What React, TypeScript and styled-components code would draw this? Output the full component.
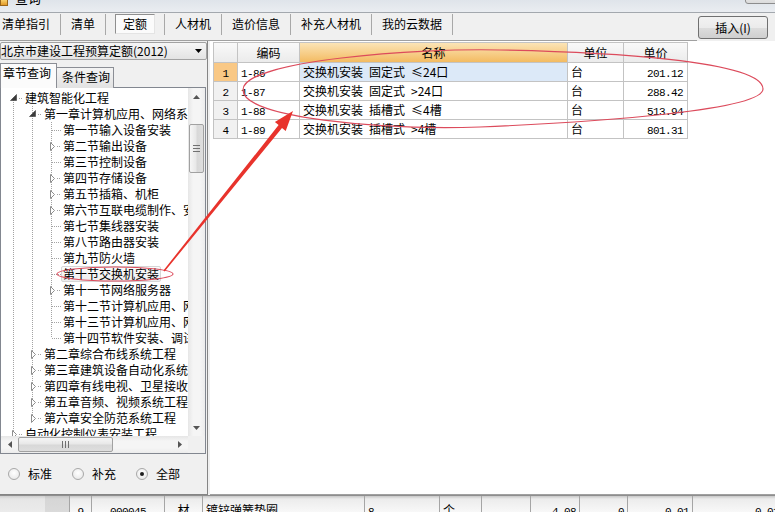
import React from "react";
import styled, { createGlobalStyle } from "styled-components";

const CJK = `"Noto Sans CJK SC", "Liberation Sans", sans-serif`;
const MONO = `"Liberation Mono", "DejaVu Sans Mono", monospace`;

const GlobalStyle = createGlobalStyle`
  *, *::before, *::after { box-sizing: border-box; }
  html, body { margin: 0; padding: 0; background: #f0f0f0; }
  body { font-family: ${CJK}; font-size: 12px; color: #000; }
`;

const Window = styled.div`
  position: relative;
  width: 775px;
  height: 512px;
  overflow: hidden;
  display: flex;
  flex-direction: column;
  background: #f0f0f0;
  font-family: ${CJK};
  font-size: 12px;
  color: #000;
`;

/* ---------- title bar ---------- */
const TitleBar = styled.div`
  flex: none;
  height: 13px;
  display: flex;
  align-items: flex-start;
  background: linear-gradient(#dfe4ea, #eaedf1);
  border-bottom: 1px solid #a3a8ae;
  overflow: hidden;
`;
const TitleIcon = styled.span`
  flex: none;
  width: 8px;
  height: 6px;
  background: linear-gradient(#f8d06a, #e39a28);
  border: 1px solid #9a661a;
  border-top: none;
`;
const TitleText = styled.span`
  margin: -10px 0 0 7px;
  font-size: 13px;
  line-height: 16px;
`;
const GhostButton = styled.span`
  flex: none;
  margin: -12px -8px 0 auto;
  width: 38px;
  height: 16px;
  border: 1px solid #8d8d8d;
  border-radius: 3px;
  background: linear-gradient(#f3f3f3, #dcdcdc);
`;

/* ---------- toolbar ---------- */
const Toolbar = styled.div`
  flex: none;
  height: 28px;
  display: flex;
`;
const NavRow = styled.div`
  flex: 1;
  display: flex;
  align-items: flex-start;
  padding-top: 1px;
  border-bottom: 1px solid #a0a0a0;
`;
const NavItem = styled.div<{ $first?: boolean }>`
  height: 21px;
  line-height: 20px;
  padding: 0 10px 0 ${(p) => (p.$first ? 2 : 10)}px;
  border-right: 1px solid #a8a8a8;
  white-space: nowrap;
`;
const NavSelected = styled.span`
  display: inline-block;
  margin: 0 -1px;
  padding: 0 7px;
  line-height: 18px;
  border: 1px solid;
  border-color: #8f8f8f #e4e4e4 #e4e4e4 #8f8f8f;
  background: #fbfbfb;
`;
const ButtonSlot = styled.div`
  flex: none;
  width: 78px;
  padding: 3px 0 0 1px;
`;
const InsertButton = styled.button`
  width: 70px;
  height: 23px;
  padding: 0;
  border: 1px solid #707070;
  border-radius: 3px;
  background: linear-gradient(#f2f2f2 0%, #ebebeb 50%, #dddddd 51%, #cfcfcf 100%);
  font-family: ${CJK};
  font-size: 12px;
  line-height: 21px;
  color: #000;
`;

/* ---------- main ---------- */
const Main = styled.div`
  flex: none;
  height: 454px;
  display: flex;
`;
const LeftPanel = styled.div`
  flex: none;
  width: 208px;
  display: flex;
  flex-direction: column;
  padding-top: 1px;
  border-right: 1px solid #858585;
  border-bottom: 1px solid #858585;
`;
const Combo = styled.div`
  flex: none;
  height: 18px;
  display: flex;
  align-items: center;
  justify-content: space-between;
  padding: 0 4px 0 0;
  border: 1px solid #a2a2a2;
  border-radius: 2px;
  background: linear-gradient(#f6f6f6, #e3e3e3);
  line-height: 16px;
  white-space: nowrap;
`;
const Tabs = styled.div`
  flex: none;
  position: relative;
  z-index: 1;
  margin-top: 3px;
  height: 25px;
  display: flex;
  align-items: flex-end;
`;
const TabButton = styled.div<{ $active?: boolean }>`
  width: 57px;
  height: ${(p) => (p.$active ? 25 : 21)}px;
  padding-left: ${(p) => (p.$active ? 2 : 5)}px;
  line-height: 17px;
  white-space: nowrap;
  border: 1px solid #8b8e95;
  border-bottom: none;
  border-left: ${(p) => (p.$active ? "1px solid #8b8e95" : "none")};
  background: ${(p) => (p.$active ? "#fbfbfb" : "linear-gradient(#f4f4f4, #e2e2e2)")};
`;
const TreeBox = styled.div`
  flex: none;
  margin-top: -1px;
  width: 206px;
  height: 367px;
  border: 1px solid #828790;
  background: #fff;
  display: grid;
  grid-template-columns: 1fr 17px;
  grid-template-rows: 1fr 17px;
`;
const TreeContent = styled.div`
  grid-column: 1;
  grid-row: 1;
  min-width: 0;
  overflow: hidden;
  padding: 2px 0 0 3px;
`;
const TreeRow = styled.div`
  height: 16px;
  display: flex;
  align-items: center;
  white-space: nowrap;
`;
const GlyphSvg = styled.svg`
  flex: none;
  display: block;
`;
const TreeLabel = styled.span<{ $selected?: boolean }>`
  flex: none;
  padding: 0 1px;
  line-height: 14px;
  border: 1px solid ${(p) => (p.$selected ? "#d6d6d6" : "transparent")};
  border-radius: 2px;
  background: ${(p) => (p.$selected ? "linear-gradient(#fbfbfb, #eeeeee)" : "transparent")};
`;

/* scrollbars */
const VScroll = styled.div`
  grid-column: 2;
  grid-row: 1;
  display: flex;
  flex-direction: column;
  background: linear-gradient(to right, #e6e6e6, #f5f5f5 30%, #f5f5f5 70%, #ececec);
`;
const HScroll = styled.div`
  grid-column: 1;
  grid-row: 2;
  display: flex;
  background: linear-gradient(#e6e6e6, #f5f5f5 30%, #f5f5f5 70%, #ececec);
`;
const Corner = styled.div`
  grid-column: 2;
  grid-row: 2;
  background: #f0f0f0;
`;
const ScrollButton = styled.div`
  flex: none;
  width: 17px;
  height: 17px;
  display: flex;
  align-items: center;
  justify-content: center;
`;
const VThumb = styled.div`
  flex: none;
  margin: 19px 1px 0;
  height: 49px;
  border: 1px solid #a1a1a1;
  border-radius: 2px;
  background: linear-gradient(to right, #f6f6f6, #e8e8e8 45%, #d8d8d8 55%, #dedede);
  display: flex;
  align-items: center;
  justify-content: center;
`;
const HThumb = styled.div`
  flex: none;
  margin: 1px 0;
  width: 95px;
  border: 1px solid #a1a1a1;
  border-radius: 2px;
  background: linear-gradient(#f6f6f6, #e8e8e8 45%, #d8d8d8 55%, #dedede);
  display: flex;
  align-items: center;
  justify-content: center;
`;
const Spacer = styled.div`
  flex: 1;
`;

/* radios */
const RadioRow = styled.div`
  flex: 1;
  display: flex;
  align-items: center;
  padding-left: 8px;
`;
const RadioItem = styled.label`
  display: flex;
  align-items: center;
  gap: 8px;
  margin-right: 20px;
  line-height: 14px;
`;
const RadioDot = styled.span`
  flex: none;
  width: 12px;
  height: 12px;
  border-radius: 50%;
  border: 1px solid #a8a8a8;
  background: radial-gradient(circle at 50% 40%, #ffffff, #e4e4e4);
  display: flex;
  align-items: center;
  justify-content: center;
`;
const RadioMark = styled.span`
  width: 4px;
  height: 4px;
  border-radius: 50%;
  background: #1e1e1e;
`;

/* right grid */
const RightPane = styled.div`
  flex: 1;
  margin-left: 2px;
  padding: 1px 0 0 3px;
  background: #fff;
  border-bottom: 1px solid #a0a0a0;
`;
const Table = styled.div`
  display: grid;
  grid-template-columns: 24px 62px 268px 56px 64px;
  grid-template-rows: 20px;
  grid-auto-rows: 19px;
  width: max-content;
  border-top: 1px solid #c3c3c3;
  border-left: 1px solid #c3c3c3;
`;
const HeadCell = styled.div<{ $hot?: boolean }>`
  border-right: 1px solid #c3c3c3;
  border-bottom: 1px solid #c3c3c3;
  line-height: 19px;
  text-align: center;
  white-space: nowrap;
  background: ${(p) =>
    p.$hot ? "linear-gradient(#fbe4b6, #f3bb62)" : "linear-gradient(#f9f9f9, #ebebeb)"};
`;
const RowHead = styled.div<{ $hot?: boolean }>`
  border-right: 1px solid #c3c3c3;
  border-bottom: 1px solid #c3c3c3;
  line-height: 18px;
  text-align: center;
  background: ${(p) => (p.$hot ? "#f9c885" : "#f1f1f1")};
`;
const Cell = styled.div<{ $align?: "left" | "right"; $tint?: boolean }>`
  border-right: 1px solid #c3c3c3;
  border-bottom: 1px solid #c3c3c3;
  padding: 0 ${(p) => (p.$align === "right" ? 4 : 3)}px 0 3px;
  line-height: 18px;
  text-align: ${(p) => p.$align ?? "left"};
  white-space: pre;
  overflow: hidden;
  background: ${(p) => (p.$tint ? "#dce9f8" : "#fff")};
`;
const Mono = styled.span`
  font-family: ${MONO};
  font-size: 11px;
  letter-spacing: -0.6px;
`;

/* bottom grid */
const BottomGrid = styled.div`
  flex: 1;
  display: flex;
  border-top: 1px solid #8e8e8e;
  background: linear-gradient(#c8c8c8, #ececec 3px, #f8f8f8);
  overflow: hidden;
`;
const BCell = styled.div<{ $w: number; $align: string; $tone?: "a" | "b" }>`
  flex: none;
  width: ${(p) => p.$w}px;
  padding: 7px 3px 0;
  line-height: 14px;
  text-align: ${(p) => p.$align};
  white-space: nowrap;
  border-right: 1px solid ${(p) => (p.$tone === "a" ? "transparent" : "#a5a5a5")};
  background: ${(p) =>
    p.$tone === "a"
      ? "linear-gradient(#cfcfcf, #e6e6e6 3px, #ebebeb)"
      : p.$tone === "b"
      ? "linear-gradient(#c4c4c4, #d6d6d6 3px, #dadada)"
      : "transparent"};
`;

const Overlay = styled.svg`
  position: absolute;
  left: 0;
  top: 0;
  pointer-events: none;
`;

/* ---------- data ---------- */
type Kind = "open" | "closed" | "leaf";
interface TNode {
  kind: Kind;
  text: string;
  guides: boolean[];
  up: boolean;
  down: boolean;
  selected?: boolean;
}

const l2 = (text: string, kind: Kind = "leaf", last = false, selected = false): TNode => ({
  kind,
  text,
  guides: [true, true],
  up: true,
  down: !last,
  selected,
});
const l1 = (text: string, kind: Kind = "closed", last = false): TNode => ({
  kind,
  text,
  guides: [true],
  up: true,
  down: !last,
});

const tree: TNode[] = [
  { kind: "open", text: "建筑智能化工程", guides: [], up: false, down: true },
  l1("第一章计算机应用、网络系统工程", "open"),
  l2("第一节输入设备安装"),
  l2("第二节输出设备", "closed"),
  l2("第三节控制设备"),
  l2("第四节存储设备", "closed"),
  l2("第五节插箱、机柜", "closed"),
  l2("第六节互联电缆制作、安装", "closed"),
  l2("第七节集线器安装"),
  l2("第八节路由器安装"),
  l2("第九节防火墙"),
  l2("第十节交换机安装", "leaf", false, true),
  l2("第十一节网络服务器", "closed"),
  l2("第十二节计算机应用、网络系统"),
  l2("第十三节计算机应用、网络系统"),
  l2("第十四节软件安装、调试", "leaf", true),
  l1("第二章综合布线系统工程"),
  l1("第三章建筑设备自动化系统工程"),
  l1("第四章有线电视、卫星接收系统工程"),
  l1("第五章音频、视频系统工程"),
  l1("第六章安全防范系统工程", "closed", true),
  { kind: "closed", text: "自动化控制仪表安装工程", guides: [], up: true, down: true },
];

const navItems = ["清单指引", "清单", "定额", "人材机", "造价信息", "补充人材机", "我的云数据"];

const SP = "\u2002";
const rows = [
  { n: 1, code: "1-86", name: `交换机安装${SP}固定式${SP}≤24口`, unit: "台", price: "201.12" },
  { n: 2, code: "1-87", name: `交换机安装${SP}固定式${SP}>24口`, unit: "台", price: "288.42" },
  { n: 3, code: "1-88", name: `交换机安装${SP}插槽式${SP}≤4槽`, unit: "台", price: "513.94" },
  { n: 4, code: "1-89", name: `交换机安装${SP}插槽式${SP}>4槽`, unit: "台", price: "801.31" },
];

const bottomCells: { w: number; t: string; a: string; tone?: "a" | "b" }[] = [
  { w: 45, t: "", a: "left", tone: "a" },
  { w: 25, t: "", a: "left", tone: "b" },
  { w: 22, t: "9", a: "center" },
  { w: 73, t: "000045", a: "center" },
  { w: 38, t: "材", a: "center" },
  { w: 162, t: "镀锌弹簧垫圈", a: "left" },
  { w: 75, t: "8", a: "left" },
  { w: 42, t: "个", a: "left" },
  { w: 49, t: "", a: "left" },
  { w: 49, t: "4.08", a: "right" },
  { w: 48, t: "0", a: "right" },
  { w: 65, t: "0.01", a: "right" },
  { w: 90, t: "0.01", a: "right" },
];

/* ---------- small drawings ---------- */
const DOT = "#a3a3a3";

function Guide({ on }: { on: boolean }) {
  return (
    <GlyphSvg width={19} height={16} viewBox="0 0 19 16">
      {on && <line x1={9.5} y1={0} x2={9.5} y2={16} stroke={DOT} strokeDasharray="1 1" />}
    </GlyphSvg>
  );
}

function Joint({ kind, up, down }: { kind: Kind; up: boolean; down: boolean }) {
  return (
    <GlyphSvg width={19} height={16} viewBox="0 0 19 16">
      {up && <line x1={9.5} y1={0} x2={9.5} y2={8} stroke={DOT} strokeDasharray="1 1" />}
      {down && <line x1={9.5} y1={8} x2={9.5} y2={16} stroke={DOT} strokeDasharray="1 1" />}
      <line x1={kind === "leaf" ? 10 : 15} y1={8.5} x2={19} y2={8.5} stroke={DOT} strokeDasharray="1 1" />
      {kind === "open" && (
        <polygon points="12.5,4.5 12.5,10.5 6.5,10.5" fill="#3a3a3a" stroke="#3a3a3a" strokeWidth={0.6} />
      )}
      {kind === "closed" && (
        <polygon points="8.5,4.5 12.5,8.5 8.5,12.5" fill="#fff" stroke="#8e8e8e" />
      )}
    </GlyphSvg>
  );
}

function Tri({ dir, color = "#555" }: { dir: "up" | "down" | "left" | "right"; color?: string }) {
  const pts: Record<string, string> = {
    up: "0,4 3.5,0 7,4",
    down: "0,0 7,0 3.5,4",
    left: "4,0 4,7 0,3.5",
    right: "0,0 4,3.5 0,7",
  };
  const vertical = dir === "up" || dir === "down";
  return (
    <GlyphSvg width={vertical ? 7 : 4} height={vertical ? 4 : 7}>
      <polygon points={pts[dir]} fill={color} />
    </GlyphSvg>
  );
}

function Grip({ horizontal }: { horizontal?: boolean }) {
  return horizontal ? (
    <GlyphSvg width={7} height={7}>
      {[0.5, 3.5, 6.5].map((x) => (
        <line key={x} x1={x} y1={0} x2={x} y2={7} stroke="#707070" />
      ))}
    </GlyphSvg>
  ) : (
    <GlyphSvg width={7} height={7}>
      {[0.5, 3.5, 6.5].map((y) => (
        <line key={y} x1={0} y1={y} x2={7} y2={y} stroke="#707070" />
      ))}
    </GlyphSvg>
  );
}

/* ---------- app ---------- */
export default function App() {
  return (
    <>
      <GlobalStyle />
      <Window>
        <TitleBar>
          <TitleIcon />
          <TitleText>查询</TitleText>
          <GhostButton />
        </TitleBar>

        <Toolbar>
          <NavRow>
            {navItems.map((t, i) => (
              <NavItem key={t} $first={i === 0}>
                {t === "定额" ? <NavSelected>{t}</NavSelected> : t}
              </NavItem>
            ))}
          </NavRow>
          <ButtonSlot>
            <InsertButton>插入(I)</InsertButton>
          </ButtonSlot>
        </Toolbar>

        <Main>
          <LeftPanel>
            <Combo>
              <span>北京市建设工程预算定额(2012)</span>
              <Tri dir="down" color="#000" />
            </Combo>
            <Tabs>
              <TabButton $active>章节查询</TabButton>
              <TabButton>条件查询</TabButton>
            </Tabs>
            <TreeBox>
              <TreeContent>
                {tree.map((n, i) => (
                  <TreeRow key={i}>
                    {n.guides.map((g, k) => (
                      <Guide key={k} on={g} />
                    ))}
                    <Joint kind={n.kind} up={n.up} down={n.down} />
                    <TreeLabel $selected={n.selected}>{n.text}</TreeLabel>
                  </TreeRow>
                ))}
              </TreeContent>
              <VScroll>
                <ScrollButton>
                  <Tri dir="up" />
                </ScrollButton>
                <VThumb>
                  <Grip />
                </VThumb>
                <Spacer />
                <ScrollButton>
                  <Tri dir="down" />
                </ScrollButton>
              </VScroll>
              <HScroll>
                <ScrollButton>
                  <Tri dir="left" />
                </ScrollButton>
                <HThumb>
                  <Grip horizontal />
                </HThumb>
                <Spacer />
                <ScrollButton>
                  <Tri dir="right" />
                </ScrollButton>
              </HScroll>
              <Corner />
            </TreeBox>
            <RadioRow>
              <RadioItem>
                <RadioDot />
                标准
              </RadioItem>
              <RadioItem>
                <RadioDot />
                补充
              </RadioItem>
              <RadioItem>
                <RadioDot>
                  <RadioMark />
                </RadioDot>
                全部
              </RadioItem>
            </RadioRow>
          </LeftPanel>

          <RightPane>
            <Table>
              <HeadCell />
              <HeadCell>编码</HeadCell>
              <HeadCell $hot>名称</HeadCell>
              <HeadCell>单位</HeadCell>
              <HeadCell>单价</HeadCell>
              {rows.map((r) => (
                <React.Fragment key={r.n}>
                  <RowHead $hot={r.n === 1}>
                    <Mono>{r.n}</Mono>
                  </RowHead>
                  <Cell>
                    <Mono>{r.code}</Mono>
                  </Cell>
                  <Cell $tint={r.n === 1}>{r.name}</Cell>
                  <Cell>{r.unit}</Cell>
                  <Cell $align="right">
                    <Mono>{r.price}</Mono>
                  </Cell>
                </React.Fragment>
              ))}
            </Table>
          </RightPane>
        </Main>

        <BottomGrid>
          {bottomCells.map((c, i) => (
            <BCell key={i} $w={c.w} $align={c.a} $tone={c.tone}>
              {/^[\d.]+$/.test(c.t) ? <Mono>{c.t}</Mono> : c.t}
            </BCell>
          ))}
        </BottomGrid>

        <Overlay width={775} height={512} viewBox="0 0 775 512">
          <path
            d="M 243 90 C 243 60, 420 48, 500 50 C 600 52, 763 60, 763 89 C 763 110, 600 122, 480 127 C 380 130, 243 118, 243 90 Z"
            fill="none"
            stroke="#dc4b5c"
            strokeWidth={1.2}
          />
          <ellipse cx={115} cy={274} rx={58} ry={7} fill="none" stroke="#dc4b5c" strokeWidth={1.1} />
          <polygon
            points="163.4,270.5 278.6,125.1 274.9,122.1 293,111 285.7,130.9 282,127.9 164.6,271.5"
            fill="#e8332c"
          />
        </Overlay>
      </Window>
    </>
  );
}
